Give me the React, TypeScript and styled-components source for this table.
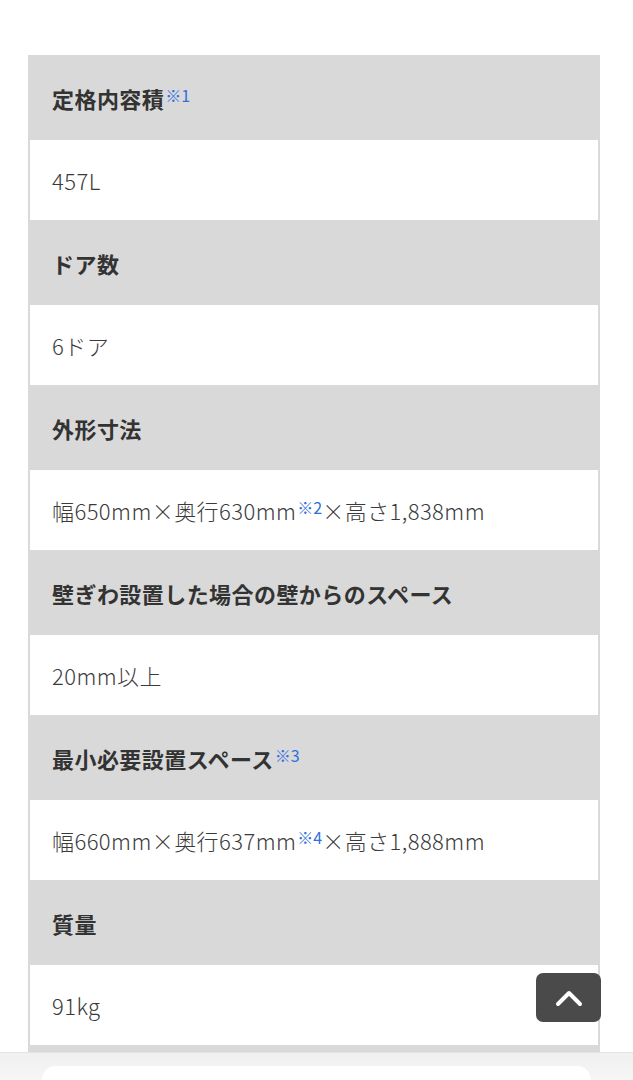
import React from 'react'
import styled, { createGlobalStyle } from 'styled-components'

const GlobalStyle = createGlobalStyle`
  body {
    margin: 0;
    background: #fff;
    font-family: "Noto Sans CJK JP", "Noto Sans", sans-serif;
    color: #333;
  }
`

const Page = styled.div`
  padding: 55px 33px 0 28px;
`

const Table = styled.dl`
  margin: 0;
  background: #d9d9d9;
  padding: 1px 2px 0;
`

const Head = styled.dt`
  height: 83px;
  display: flex;
  align-items: center;
  padding-left: 22px;
  font-size: 22px;
  font-weight: 700;
  letter-spacing: 0.02em;
  color: #333;
`

const Value = styled.dd`
  margin: 1px 0;
  height: 80px;
  background: #fff;
  display: flex;
  align-items: center;
  padding-left: 22px;
  font-size: 22px;
  font-weight: 300;
  letter-spacing: 0.02em;
  color: #3a3a3a;
`

const Note = styled.sup`
  font-size: 16px;
  font-weight: 400;
  color: #2f6fe0;
  letter-spacing: 0;
  margin-left: 1px;
  position: relative;
  top: -3px;
`

const TopButton = styled.button`
  position: fixed;
  left: 536px;
  top: 973px;
  width: 65px;
  height: 49px;
  border: none;
  border-radius: 7px;
  background: #4a4a4a;
  display: flex;
  align-items: center;
  justify-content: center;
  padding: 0;
`

const BottomBar = styled.div`
  position: fixed;
  left: 0;
  right: 0;
  bottom: 0;
  height: 27px;
  background: linear-gradient(#f0f0f0, #f6f6f6);
  border-top: 1px solid #e4e4e4;
  display: flex;
  align-items: flex-end;
  padding: 0 42px;
`

const Pill = styled.div`
  flex: 1;
  height: 14px;
  background: #fff;
  border-radius: 16px 16px 0 0;
`

const rows: { label: React.ReactNode; value: React.ReactNode }[] = [
  { label: <>定格内容積<Note>※1</Note></>, value: '457L' },
  { label: 'ドア数', value: '6ドア' },
  {
    label: '外形寸法',
    value: <>幅650mm×奥行630mm<Note>※2</Note>×高さ1,838mm</>,
  },
  { label: '壁ぎわ設置した場合の壁からのスペース', value: '20mm以上' },
  { label: <>最小必要設置スペース<Note>※3</Note></>, value: <>幅660mm×奥行637mm<Note>※4</Note>×高さ1,888mm</> },
  { label: '質量', value: '91kg' },
  { label: '', value: '' },
]

const App = () => (
  <Page>
    <GlobalStyle />
    <Table>
      {rows.map((r, i) => (
        <React.Fragment key={i}>
          <Head>{r.label}</Head>
          <Value>{r.value}</Value>
        </React.Fragment>
      ))}
    </Table>
    <TopButton aria-label="ページトップへ">
      <svg width="28" height="18" viewBox="0 0 28 18" fill="none">
        <path d="M3 15 L14 4 L25 15" stroke="#fff" strokeWidth="4" strokeLinecap="round" strokeLinejoin="round" />
      </svg>
    </TopButton>
    <BottomBar>
      <Pill />
    </BottomBar>
  </Page>
)

export default App
